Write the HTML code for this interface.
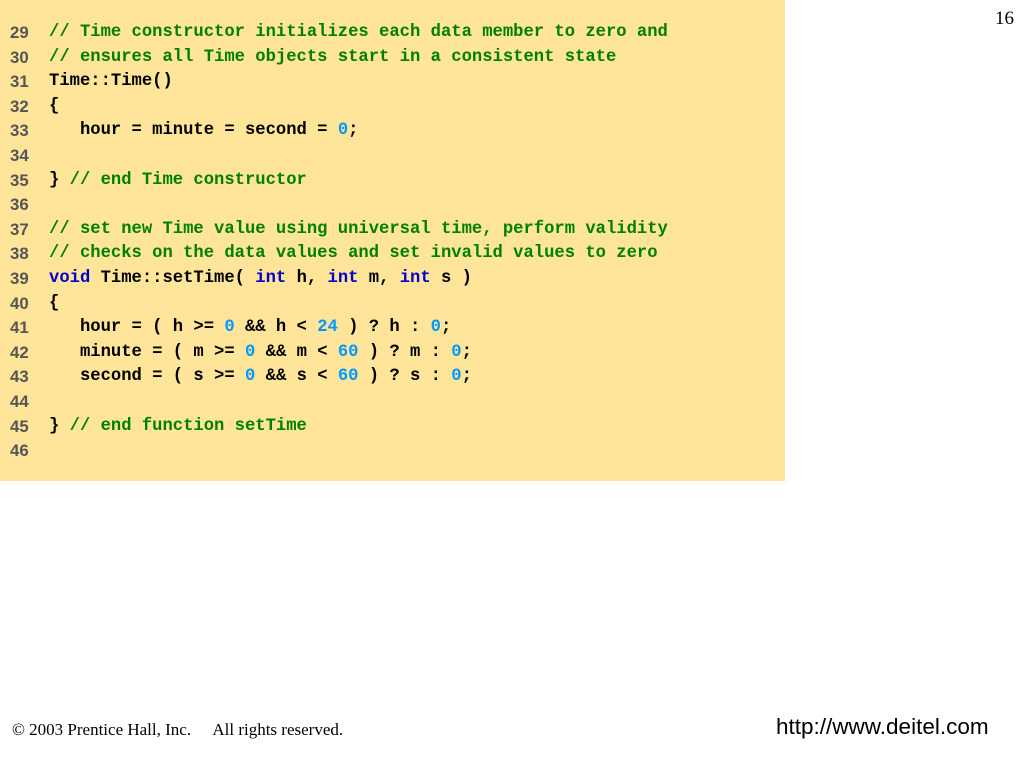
<!DOCTYPE html>
<html><head><meta charset="utf-8"><style>
body{margin:0;width:1024px;height:768px;background:#fff;position:relative;overflow:hidden}
#panel{position:absolute;left:0;top:0;width:785px;height:481px;background:#FFE599}
.l{position:absolute;left:0;height:25px;white-space:pre}
.n{position:absolute;left:10px;top:0px;width:22px;font:bold 16.8px "Liberation Sans",sans-serif;color:#555;}
.c{position:absolute;left:49px;font:bold 17.2px "Liberation Mono",monospace;color:#000}
.g{color:#008000}.b{color:#0000cc}.k{color:#0099ff}
#pg{position:absolute;right:10px;top:8px;font:19px "Liberation Serif",serif}
#cp{position:absolute;left:12px;top:720px;font:17px "Liberation Serif",serif}
#url{position:absolute;left:776px;top:714px;font:22.5px "Liberation Sans",sans-serif}
#w{position:absolute;left:0;top:3px;width:1024px}
</style></head><body>
<div id="panel"></div>
<div id="pg">16</div>
<div id="w">
<div class="l" style="top:20px"><span class="n">29</span><span class="c g">// Time constructor initializes each data member to zero and</span></div>
<div class="l" style="top:44.6px"><span class="n">30</span><span class="c g">// ensures all Time objects start in a consistent state</span></div>
<div class="l" style="top:69.2px"><span class="n">31</span><span class="c">Time::Time()</span></div>
<div class="l" style="top:93.8px"><span class="n">32</span><span class="c">{</span></div>
<div class="l" style="top:118.4px"><span class="n">33</span><span class="c">   hour = minute = second = <span class="k">0</span>;</span></div>
<div class="l" style="top:143px"><span class="n">34</span></div>
<div class="l" style="top:167.6px"><span class="n">35</span><span class="c">} <span class="g">// end Time constructor</span></span></div>
<div class="l" style="top:192.2px"><span class="n">36</span></div>
<div class="l" style="top:216.8px"><span class="n">37</span><span class="c g">// set new Time value using universal time, perform validity</span></div>
<div class="l" style="top:241.4px"><span class="n">38</span><span class="c g">// checks on the data values and set invalid values to zero</span></div>
<div class="l" style="top:266px"><span class="n">39</span><span class="c"><span class="b">void</span> Time::setTime( <span class="b">int</span> h, <span class="b">int</span> m, <span class="b">int</span> s )</span></div>
<div class="l" style="top:290.6px"><span class="n">40</span><span class="c">{</span></div>
<div class="l" style="top:315.2px"><span class="n">41</span><span class="c">   hour = ( h &gt;= <span class="k">0</span> &amp;&amp; h &lt; <span class="k">24</span> ) ? h : <span class="k">0</span>;</span></div>
<div class="l" style="top:339.8px"><span class="n">42</span><span class="c">   minute = ( m &gt;= <span class="k">0</span> &amp;&amp; m &lt; <span class="k">60</span> ) ? m : <span class="k">0</span>;</span></div>
<div class="l" style="top:364.4px"><span class="n">43</span><span class="c">   second = ( s &gt;= <span class="k">0</span> &amp;&amp; s &lt; <span class="k">60</span> ) ? s : <span class="k">0</span>;</span></div>
<div class="l" style="top:389px"><span class="n">44</span></div>
<div class="l" style="top:413.6px"><span class="n">45</span><span class="c">} <span class="g">// end function setTime</span></span></div>
<div class="l" style="top:438.2px"><span class="n">46</span></div>
</div>
<div id="cp">© 2003 Prentice Hall, Inc. &nbsp;&nbsp;&nbsp;&nbsp;All rights reserved.</div>
<div id="url">http://www.deitel.com</div>
</body></html>
